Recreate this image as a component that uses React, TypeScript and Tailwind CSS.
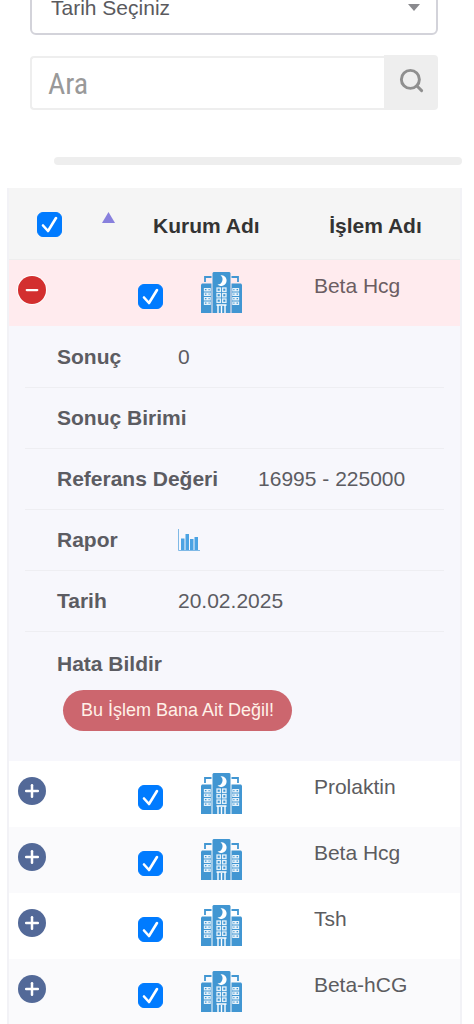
import { Minus, Plus, Search } from 'lucide-react'

type Result = {
  id: number
  name: string
}

const results: Result[] = [
  { id: 2, name: 'Prolaktin' },
  { id: 3, name: 'Beta Hcg' },
  { id: 4, name: 'Tsh' },
  { id: 5, name: 'Beta-hCG' },
]

function HospitalIcon() {
  return (
    <svg viewBox="0 0 41 41" className="size-[41px]" aria-hidden="true">
      <g fill="#4196d2">
        <path d="M0 12.5 1 11.5h9.500V41H0z" />
        <path d="M30.500 11.5H40l1 1V41H30.500z" />
        <path d="M11.5 1l1-1h16l1 1v40h-18z" />
      </g>
      <path
        d="M4 10V5h6.5M37 10V5h-6.5"
        fill="none"
        stroke="#4196d2"
        strokeWidth="1.8"
      />
      <path d="M19.500 3.200a5.400 5.400 0 1 1-3 9.300 5.200 5.200 0 0 0 3-9.300z" fill="#fff" />
      {[16, 21.5, 27].map((y) => (
        <g key={y} fill="none" stroke="#e6f2fa" strokeWidth="1.3">
          <rect x="16" y={y} width="3.4" height="3.4" />
          <rect x="21.6" y={y} width="3.4" height="3.4" />
        </g>
      ))}
      {[16.5, 21, 25.5, 30].map((y) => (
        <g key={y} fill="none" stroke="#e6f2fa" strokeWidth="1.1">
          <path d={`M3.4 ${y}h2.6v2.4H3.4zM7 ${y}h2.2v2.4H7z`} />
          <path d={`M31.8 ${y}h2.2v2.4h-2.2zM35 ${y}h2.6v2.4H35z`} />
        </g>
      ))}
      <path
        d="M15.5 33h10M17 33v8M20.5 34v7M24 33v8"
        fill="none"
        stroke="#fff"
        strokeWidth="1.4"
      />
    </svg>
  )
}

function ChartIcon() {
  return (
    <svg viewBox="0 0 22 22" className="size-[22px]" aria-hidden="true">
      <path d="M.5 0v21.5H22" fill="none" stroke="#7fb9e6" />
      <path
        d="M3 9.5h3.500V21H3zM7.5 5H11v16H7.500zM12 10h3.500v11H12zM16.500 8H20v13h-3.500z"
        fill="#4ba3e3"
      />
    </svg>
  )
}

function Checkbox({ label }: { label: string }) {
  return (
    <label className="grid size-[25px] shrink-0">
      <input
        type="checkbox"
        defaultChecked
        aria-label={label}
        className="peer col-start-1 row-start-1 size-[25px] appearance-none rounded-md border border-gray-400 bg-white checked:border-[#007bff] checked:bg-[#007bff]"
      />
      <svg
        viewBox="0 0 25 25"
        className="pointer-events-none col-start-1 row-start-1 size-[25px] opacity-0 peer-checked:opacity-100"
        aria-hidden="true"
      >
        <path
          d="M6 13.500l5 5.500 8-13"
          fill="none"
          stroke="#fff"
          strokeWidth="2.6"
          strokeLinecap="round"
          strokeLinejoin="round"
        />
      </svg>
    </label>
  )
}

function ResultRow({ name, open = false }: { name: string; open?: boolean }) {
  return (
    <tr
      className={
        open
          ? 'h-[66px] bg-[#ffebee] align-top'
          : 'h-[66px] align-top even:bg-[#fafafc]'
      }
    >
      <td className="pt-4 pl-[9px]">
        <button
          type="button"
          aria-expanded={open}
          aria-label={`${name} detayı`}
          className={
            open
              ? 'flex size-7 items-center justify-center rounded-full bg-[#d32f2f] text-white ring-1 ring-white'
              : 'flex size-7 items-center justify-center rounded-full bg-[#536998] text-white'
          }
        >
          {open ? (
            <Minus className="size-[18px]" strokeWidth={3} />
          ) : (
            <Plus className="size-5" strokeWidth={3} />
          )}
        </button>
      </td>
      <td className="pt-3 pl-4">
        <div className="flex items-end gap-[38px]">
          <div className="pb-1">
            <Checkbox label={`${name} seç`} />
          </div>
          <HospitalIcon />
        </div>
      </td>
      <td
        className={
          open
            ? 'pt-3 pl-[23px] leading-7 text-[#6b5d62]'
            : 'pt-3 pl-[23px] leading-7 text-[#5c5c60]'
        }
      >
        {name}
      </td>
    </tr>
  )
}

function DetailItem({
  title,
  children,
}: {
  title: string
  children?: React.ReactNode
}) {
  return (
    <div className="flex h-[61px] items-center gap-10 border-b border-[#eeeef2] pl-8">
      <dt className="min-w-[81px] font-bold">{title}</dt>
      <dd>{children}</dd>
    </div>
  )
}

export default function App() {
  return (
    <main className="overflow-hidden bg-white font-['Liberation_Sans',Arial,sans-serif] text-[21px] text-[#5c5c62]">
      <form className="pr-9 pl-[30px]">
        <div className="-mt-5 grid">
          <select
            aria-label="Tarih"
            className="col-start-1 row-start-1 h-[55px] w-full appearance-none rounded-md border-2 border-[#d3d3da] bg-white px-[19px] text-[#5a5a5e]"
          >
            <option>Tarih Seçiniz</option>
          </select>
          <svg
            viewBox="0 0 12 7"
            className="pointer-events-none col-start-1 row-start-1 mr-[18px] h-[7px] w-3 self-center justify-self-end"
            aria-hidden="true"
          >
            <path d="M0 0h12L6 7z" fill="#8a8a8e" />
          </svg>
        </div>

        <div className="mt-5 flex h-[55px] items-end">
          <input
            type="text"
            aria-label="Ara"
            placeholder="Ara"
            className="h-[54px] min-w-0 flex-1 rounded-l border-2 border-r-0 border-[#eeeeee] px-4 font-['Roboto_Condensed','Open_Sans_Condensed',Roboto,sans-serif] text-[30px] placeholder:text-[#999999]"
          />
          <button
            type="submit"
            aria-label="Ara"
            className="flex h-[55px] w-[54px] items-center justify-center rounded-r bg-[#eeeeee] pb-1 text-[#8f8f8f]"
          >
            <Search className="size-[27px]" strokeWidth={2.6} />
          </button>
        </div>
      </form>

      <div className="mt-[47px] mr-3 ml-[54px] h-2 rounded-full bg-[#eeeeee]" />

      <div className="mt-[23px] mr-3 ml-[7px]">
        <table className="w-full table-fixed border-separate border-spacing-0 border-r-2 border-l-2 border-[#f2f2f6]">
          <colgroup>
            <col className="w-1/4" />
            <col className="w-3/8" />
            <col className="w-3/8" />
          </colgroup>
          <thead className="bg-[#f5f5f5] text-[#333333]">
            <tr className="h-[72px]">
              <th className="border-b border-[#eeeeee]">
                <div className="flex items-start justify-between pt-px pr-[7px] pl-7">
                  <Checkbox label="Tümünü seç" />
                  <svg
                    viewBox="0 0 13 11"
                    className="h-[11px] w-[13px]"
                    aria-hidden="true"
                  >
                    <path d="M6.500 0L13 11H0z" fill="#8880dd" />
                  </svg>
                </div>
              </th>
              <th className="border-b border-[#eeeeee] pt-1">Kurum Adı</th>
              <th className="border-b border-[#eeeeee] pt-1">İşlem Adı</th>
            </tr>
          </thead>
          <tbody>
            <ResultRow name="Beta Hcg" open />
            <tr className="h-[435px] bg-[#f7f7fc] align-top">
              <td colSpan={3} className="px-4 pt-px">
                <dl>
                  <DetailItem title="Sonuç">0</DetailItem>
                  <DetailItem title="Sonuç Birimi" />
                  <DetailItem title="Referans Değeri">
                    16995 - 225000
                  </DetailItem>
                  <DetailItem title="Rapor">
                    <a href="#rapor" aria-label="Raporu aç" className="block">
                      <ChartIcon />
                    </a>
                  </DetailItem>
                  <DetailItem title="Tarih">20.02.2025</DetailItem>
                  <div className="pt-4 pl-8">
                    <dt className="font-bold">Hata Bildir</dt>
                    <dd className="pt-[10px] pl-[6px]">
                      <button
                        type="button"
                        className="h-[41px] rounded-full bg-[#cc666e] px-[18px] text-[18px] text-[#fff1e8]"
                      >
                        Bu İşlem Bana Ait Değil!
                      </button>
                    </dd>
                  </div>
                </dl>
              </td>
            </tr>
          </tbody>
          <tbody>
            {results.map((result) => (
              <ResultRow key={result.id} name={result.name} />
            ))}
          </tbody>
        </table>
      </div>
    </main>
  )
}
